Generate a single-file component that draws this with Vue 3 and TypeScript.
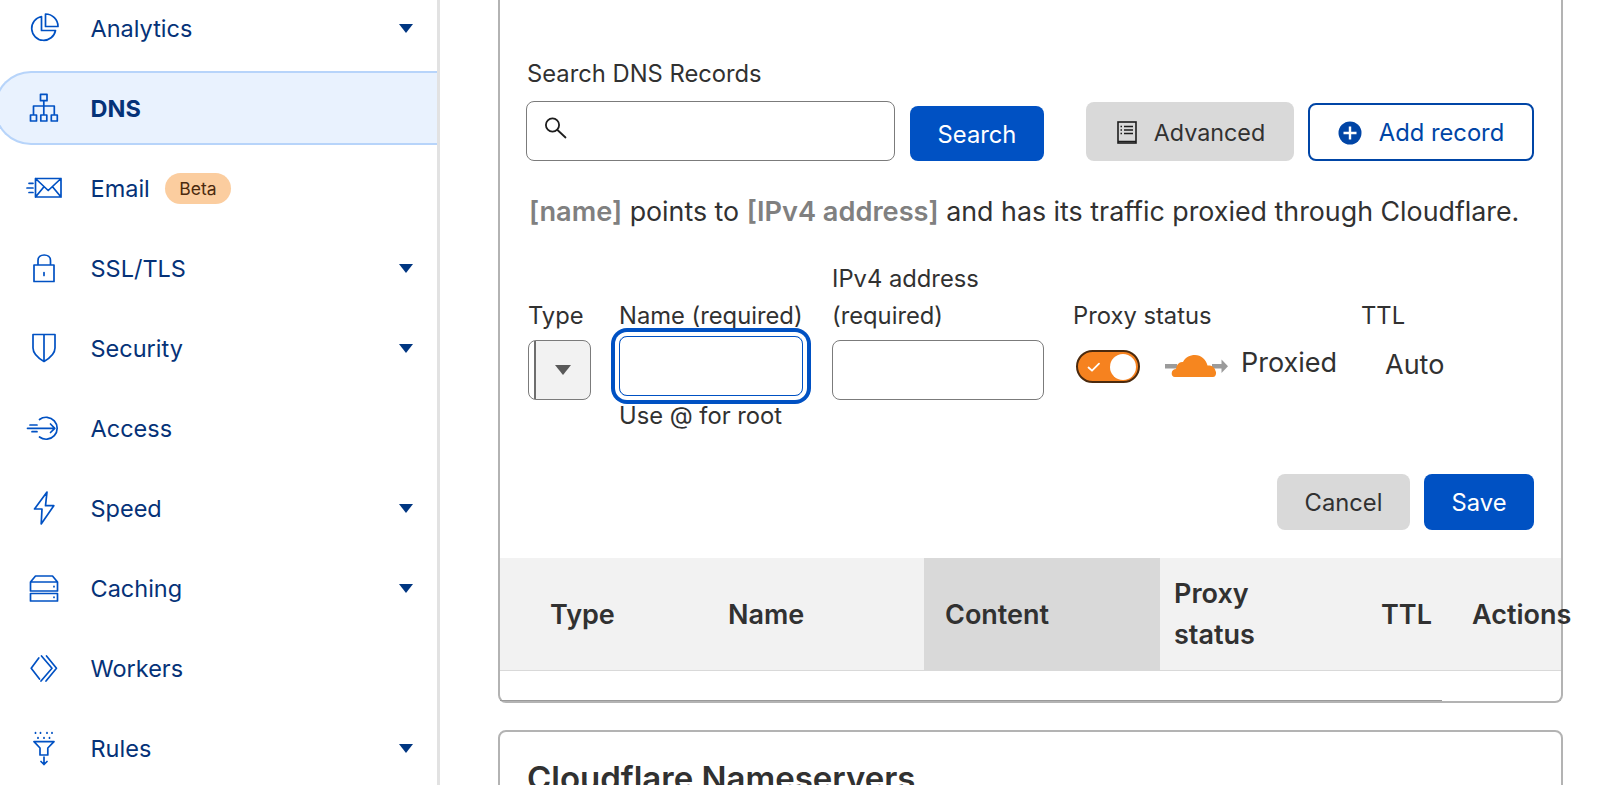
<template>
  <div class="page">
    <nav class="sidebar">
      <a v-for="item in navItems" :key="item.label" class="nav-item" :class="{ active: item.active }">
        <svg class="nav-icon" width="36" height="36" viewBox="0 0 36 36" fill="none" stroke="currentColor" stroke-width="1.7" stroke-linecap="round" stroke-linejoin="round">
          <path :d="item.icon" />
        </svg>
        <span class="nav-label">{{ item.label }}</span>
        <span v-if="item.badge" class="badge">{{ item.badge }}</span>
        <span v-if="item.caret" class="caret"></span>
      </a>
    </nav>

    <main class="content">
      <section class="card records">
        <div class="search-block">
          <div class="search-field">
            <label class="field-label">Search DNS Records</label>
            <div class="search-input">
              <svg width="28" height="28" viewBox="0 0 28 28" fill="none" stroke="#1d1d1d" stroke-width="1.8" stroke-linecap="round">
                <circle cx="10.5" cy="10" r="6.6" />
                <path d="M15.5 15l8 7.5" />
              </svg>
            </div>
          </div>
          <button class="btn primary search-btn">Search</button>
          <button class="btn grey advanced-btn">
            <svg width="20" height="23" viewBox="0 0 20 23" fill="none" stroke="#1d1d1d" stroke-width="1.6">
              <rect x="1" y="1" width="18" height="21" />
              <path d="M1 20.5h18M7 5.5h9M7 9h9M7 12.5h9M3.5 5.5h1.5M3.5 9h1.5M3.5 12.5h1.5" />
            </svg>
            Advanced
          </button>
          <button class="btn outline add-btn">
            <svg width="24" height="24" viewBox="0 0 24 24">
              <circle cx="12" cy="12" r="11.5" fill="#0045a6" />
              <path d="M12 5.5v13M5.5 12h13" stroke="#fff" stroke-width="2.4" />
            </svg>
            Add record
          </button>
        </div>

        <p class="summary">
          <b>[name]</b> points to <b>[IPv4 address]</b> and has its traffic proxied through Cloudflare.
        </p>

        <div class="record-form">
          <label class="field-label">Type</label>
          <label class="field-label">Name (required)</label>
          <label class="field-label">IPv4 address (required)</label>
          <label class="field-label">Proxy status</label>
          <label class="field-label">TTL</label>

          <div class="select"><span class="select-arrow"></span></div>
          <div class="text-input focused"></div>
          <div class="text-input ipv4"></div>
          <div class="proxy">
            <span class="toggle">
              <svg width="16" height="14" viewBox="0 0 16 14" fill="none" stroke="#fff" stroke-width="1.8" stroke-linecap="round" stroke-linejoin="round">
                <path d="M2.5 7.5l3.5 3.2 7-7" />
              </svg>
              <span class="knob"></span>
            </span>
            <svg class="cloud" width="64" height="24" viewBox="0 0 64 24">
              <path d="M1 10h12v4.500H1zM48 10h11v4.500H48z" fill="#9b9b9b" />
              <path d="M57.500 5.500l6.500 6.700-6.500 6.700z" fill="#9b9b9b" />
              <path d="M11 23C8.500 23 7.500 21 7.700 19C7.900 16.500 10 15 12 15C12.500 11 15 8 18 8L19 8C21 3.500 26 1 31 1C37 1 42 5.500 43.500 11.500C47 11 51 13 51.500 17C52.500 17.500 52.500 23 49 23Z" fill="#f6861f" />
            </svg>
            <span class="proxy-text">Proxied</span>
          </div>
          <div class="ttl-value">Auto</div>

          <div></div>
          <div class="hint">Use @ for root</div>
        </div>

        <div class="form-actions">
          <button class="btn grey cancel-btn">Cancel</button>
          <button class="btn primary save-btn">Save</button>
        </div>

        <div class="table-head">
          <div class="th type">Type</div>
          <div class="th name">Name</div>
          <div class="th sorted">Content</div>
          <div class="th proxy-col"><span>Proxy status</span></div>
          <div class="th ttl">TTL</div>
          <div class="th actions">Actions</div>
        </div>
        <div class="table-scrollbar"></div>
      </section>

      <section class="card nameservers">
        <h2>Cloudflare Nameservers</h2>
      </section>
    </main>
  </div>
</template>

<script setup lang="ts">
interface NavItem {
  label: string
  icon: string
  caret?: boolean
  active?: boolean
  badge?: string
}

const navItems: NavItem[] = [
  {
    label: 'Analytics',
    caret: true,
    icon: 'M19.5 4A12.500 12.500 0 0 1 32 16.500H19.500ZM15.500 6.500A12 12 0 1 0 29.500 20.500H15.500Z',
  },
  {
    label: 'DNS',
    active: true,
    icon: 'M14.500 4.300h6.500v6.400h-6.500zM17.800 10.700V16M7.500 25V16H28.300V25M17.800 16V25M4.500 25h6v6h-6zM14.800 25h6v6h-6zM25.300 25h6v6h-6z',
  },
  {
    label: 'Email',
    badge: 'Beta',
    icon: 'M9.500 8.500H35V27H9.500ZM9.500 8.500L22.200 20.500L35 8.500M9.500 27L18 16.800M35 27L26.500 16.800M3 13.300H7M1 18H7M3 22.500H7',
  },
  {
    label: 'SSL/TLS',
    caret: true,
    icon: 'M8 15H28V31.500H8ZM12 15V10.500C12 7 14.500 5 18.200 5C21.800 5 24.500 7 24.500 10.500V15M18 22.500V25.500',
  },
  {
    label: 'Security',
    caret: true,
    icon: 'M7 4.500H29V18C29 24 24 28 18 31.500C12 28 7 24 7 18ZM18 4.500V31',
  },
  {
    label: 'Access',
    icon: 'M13.500 9.500A11 11 0 1 1 13.500 27M1.500 18.300H28.500M24.500 14L28.800 18.300L24.500 22.500M4 15H11M6 21.700H11',
  },
  {
    label: 'Speed',
    caret: true,
    icon: 'M21 2L8.500 19H16L15.200 34L27.800 15.700H19.500Z',
  },
  {
    label: 'Caching',
    caret: true,
    icon: 'M4.500 12L9.500 6H26.500L31.500 12V21H4.500ZM4.500 12H31.500M4.500 23.500H31.500V31H4.500ZM28 16.300V16.800M28 27V27.500',
  },
  {
    label: 'Workers',
    icon: 'M12.800 8L5.200 18.300L13.500 29M15.500 6L26 18.300L15 31M20.500 6L30.500 18.300L20 31',
  },
  {
    label: 'Rules',
    caret: true,
    icon: 'M9.500 2.500V3.200M14.500 2.500V3.200M21 2.500V3.200M26 2.500V3.200M12 7.500V8.200M18 7.500V8.200M23.500 7.500V8.200M8 11.700H28L21.800 18V25H14V18ZM18 27V34.500M15 31.500L18 34.500L21 31.500',
  },
]
</script>

<style>
html, body {
  margin: 0;
  height: 100%;
  overflow: hidden;
  background: #fff;
}
</style>

<style scoped>
* { box-sizing: border-box; }

.page {
  display: flex;
  height: 785px;
  overflow: hidden;
  background: #fff;
  color: #313131;
  font-family: Inter, "Liberation Sans", sans-serif;
  font-size: 23.75px;
}

/* sidebar */
.sidebar {
  flex: none;
  width: 440px;
  height: 797px;
  margin-top: -12px;
  border-right: 3px solid #e2e2e2;
}

.nav-item {
  position: relative;
  display: flex;
  align-items: center;
  height: 80px;
  padding-left: 25.5px;
  color: #053278;
  font-size: 23.5px;
}

.nav-item.active {
  height: 74px;
  margin: 3px 0 3px -6px;
  padding-left: 29.5px;
  background: #e9f2fe;
  border: 2px solid #b7d4fa;
  border-right: 0;
  border-radius: 37px 0 0 37px;
}

.nav-item.active .nav-label { font-weight: 700; }

.nav-icon {
  flex: none;
  color: #0051c3;
  margin-right: 29px;
}

.nav-label { padding-top: 1px; line-height: 36px; }

.badge {
  margin-left: 15px;
  padding: 0 14.5px;
  height: 31px;
  line-height: 31px;
  border-radius: 16px;
  background: #fbcd9f;
  color: #4b2a0e;
  font-size: 17.5px;
}

.caret {
  position: absolute;
  right: 24px;
  top: 36px;
  border-style: solid;
  border-width: 9px 7px 0;
  border-color: #003681 transparent transparent;
}

/* main */
.content {
  flex: none;
  width: 1160px;
  padding-left: 58px;
}

.card {
  width: 1065px;
  border: 2px solid #b3b3b3;
  border-radius: 8px;
  background: #fff;
}

.records {
  position: relative;
  height: 743px;
  margin-top: -40px;
  padding-top: 96px;
  border-top: 0;
}

.search-block {
  display: flex;
  align-items: flex-end;
  padding-left: 26px;
}

.field-label {
  display: block;
  line-height: 36.5px;
}

.search-field .field-label { margin-left: 1px; margin-bottom: 8.500px; }

.search-input {
  width: 369px;
  height: 60px;
  border: 1.5px solid #7b7b7b;
  border-radius: 8px;
  padding: 13px 0 0 15px;
}

.btn {
  display: flex;
  align-items: center;
  justify-content: center;
  border: 0;
  border-radius: 8px;
  font: inherit;
  cursor: pointer;
}

.primary { background: #0051c3; color: #fff; }
.grey { background: #d9d9d9; color: #313131; }
.outline { background: #fff; color: #0045a6; border: 2px solid #0045a6; }

.search-btn { width: 134px; height: 55px; margin-left: 15px; padding-top: 2px; }
.advanced-btn { width: 208px; height: 59px; margin-left: 42px; gap: 17px; padding: 2px 0 0 2px; font-size: 23.3px; }
.add-btn { width: 226px; height: 58px; margin-left: 14px; gap: 17px; padding-top: 2px; }

.summary {
  margin: 30px 0 0 29px;
  line-height: 40px;
  font-size: 26.8px;
  white-space: nowrap;
}

.summary b { color: #808080; font-size: 27.2px; font-weight: 600; }

.record-form {
  display: grid;
  grid-template-columns: 63px 185px 213px 260px auto;
  column-gap: 28px;
  grid-template-rows: 74px 60px 30px;
  margin: 34px 0 0 28px;
  align-items: end;
}

.record-form > .field-label { align-self: end; margin-bottom: 6px; }

.select {
  position: relative;
  width: 63px;
  height: 60px;
  border: 1.5px solid #7b7b7b;
  border-radius: 8px;
  background: linear-gradient(90deg, #fff 5px, #6e6e6e 5px, #6e6e6e 7px, #f2f2f2 7px);
}

.select-arrow {
  position: absolute;
  left: 26px;
  top: 24px;
  border-style: solid;
  border-width: 10px 8.500px 0;
  border-color: #595959 transparent transparent;
}

.text-input {
  height: 60px;
  border: 1.5px solid #7b7b7b;
  border-radius: 8px;
}

.text-input.ipv4 { width: 212px; }

.text-input.focused {
  width: 184px;
  margin-bottom: 4px;
  border: 1.5px solid #0051c3;
  box-shadow: 0 0 0 4px #fff, 0 0 0 8px #0051c3;
}

.proxy {
  display: flex;
  align-items: center;
  align-self: start;
  margin-left: 3px;
  padding-top: 6px;
}

.toggle {
  flex: none;
  display: flex;
  align-items: center;
  justify-content: space-between;
  width: 64px;
  height: 33px;
  padding: 0 2px 0 8px;
  border: 2px solid #4b2a0e;
  border-radius: 17px;
  background: #f6821f;
}

.knob {
  width: 26px;
  height: 26px;
  border-radius: 50%;
  background: #fff;
}

.cloud { flex: none; margin-left: 24px; margin-bottom: 2px; }

.proxy-text { flex: none; margin-left: 13px; margin-bottom: 8px; font-size: 27px; }

.ttl-value {
  align-self: start;
  padding: 7px 0 0 24px;
  font-size: 27px;
  line-height: 36px;
}

.hint {
  align-self: start;
  grid-column: 2 / span 2;
  padding-top: 1px;
  line-height: 30px;
}

.form-actions {
  display: flex;
  justify-content: flex-end;
  gap: 14px;
  padding-right: 27px;
  margin-top: 44px;
}

.cancel-btn { width: 133px; height: 56px; }
.save-btn { width: 110px; height: 56px; }

.table-head {
  display: grid;
  grid-template-columns: 207px 217px 236px 200px 91px 1fr;
  height: 113px;
  margin-top: 28px;
  background: #f2f2f2;
  border-bottom: 1.5px solid #d9d9d9;
  font-size: 27px;
  font-weight: 600;
  line-height: 41px;
}

.th {
  display: flex;
  align-items: center;
  padding-left: 21px;
  white-space: nowrap;
}

.th.type { padding-left: 50px; }
.th.sorted { background: #d9d9d9; }
.th.proxy-col { padding-left: 14px; }
.th.proxy-col span { width: 100px; white-space: normal; }

.table-scrollbar {
  position: absolute;
  left: 0;
  bottom: 0;
  width: 942px;
  height: 1.500px;
  background: #9a9a9a;
}

.nameservers {
  height: 200px;
  margin-top: 27px;
  padding: 26px 27px;
}

.nameservers h2 {
  margin: 0;
  font-size: 33px;
  font-weight: 600;
  line-height: 40px;
  white-space: nowrap;
}
</style>
